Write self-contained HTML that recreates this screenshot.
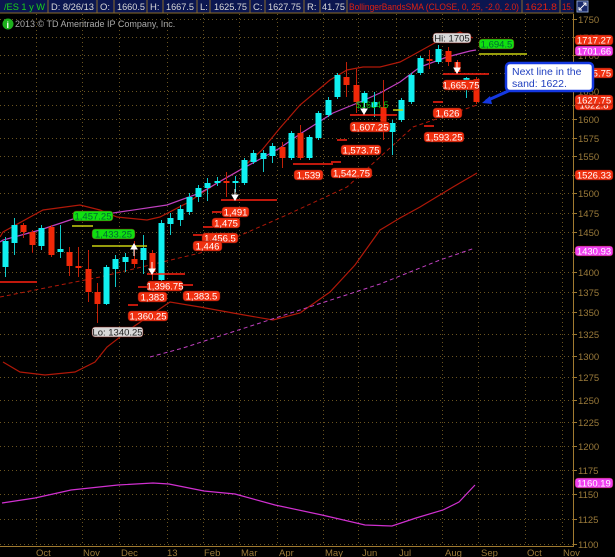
<!DOCTYPE html>
<html><head><meta charset="utf-8"><style>
html,body{margin:0;padding:0;background:#000;width:615px;height:557px;overflow:hidden}
svg{display:block}
text{font-family:"Liberation Sans",sans-serif}
</style></head><body>
<svg id="s" width="615" height="557" viewBox="0 0 615 557" xmlns="http://www.w3.org/2000/svg">
<rect width="615" height="557" fill="#000"/>
<g id="grid" stroke="#6a5420" stroke-width="1" stroke-dasharray="1,3"></g>
<!-- header -->
<rect x="0" y="0" width="574" height="13" fill="#0b1650"/>
<g stroke="#8a6a2a" stroke-width="1">
<line x1="48" y1="0" x2="48" y2="13"/><line x1="97" y1="0" x2="97" y2="13"/><line x1="114" y1="0" x2="114" y2="13"/>
<line x1="147" y1="0" x2="147" y2="13"/><line x1="163" y1="0" x2="163" y2="13"/><line x1="197" y1="0" x2="197" y2="13"/>
<line x1="210" y1="0" x2="210" y2="13"/><line x1="250" y1="0" x2="250" y2="13"/><line x1="265" y1="0" x2="265" y2="13"/>
<line x1="304" y1="0" x2="304" y2="13"/><line x1="320" y1="0" x2="320" y2="13"/><line x1="347" y1="0" x2="347" y2="13"/>
<line x1="522" y1="0" x2="522" y2="13"/><line x1="560" y1="0" x2="560" y2="13"/><line x1="0" y1="13" x2="574" y2="13"/>
</g>
<g font-size="9.5" fill="#d8d8d8">
<text x="4" y="10" fill="#19d219" textLength="41" lengthAdjust="spacingAndGlyphs">/ES 1 y W</text>
<text x="51" y="10" textLength="43" lengthAdjust="spacingAndGlyphs">D: 8/26/13</text><text x="100" y="10">O:</text><text x="117" y="10" textLength="28" lengthAdjust="spacingAndGlyphs">1660.5</text>
<text x="150" y="10">H:</text><text x="166" y="10" textLength="28" lengthAdjust="spacingAndGlyphs">1667.5</text><text x="200" y="10">L:</text>
<text x="214" y="10" textLength="33" lengthAdjust="spacingAndGlyphs">1625.75</text><text x="253" y="10">C:</text><text x="268" y="10" textLength="33" lengthAdjust="spacingAndGlyphs">1627.75</text>
<text x="307" y="10">R:</text><text x="322" y="10" textLength="23" lengthAdjust="spacingAndGlyphs">41.75</text>
<text x="349" y="10" fill="#e02010" textLength="170" lengthAdjust="spacingAndGlyphs">BollingerBandsSMA (CLOSE, 0, 25, -2.0, 2.0)</text>
<text x="525" y="10" fill="#e02010" textLength="32" lengthAdjust="spacingAndGlyphs">1621.8</text><text x="562" y="10" fill="#e02010" textLength="11" lengthAdjust="spacingAndGlyphs">15.</text>
</g>
<rect x="577" y="1" width="11" height="11" fill="#1a2a6a" stroke="#8aa0d0"/>
<path d="M579 10 L586 3 M583 3 L586 3 L586 6 M579 7 L579 10 L582 10" stroke="#fff" fill="none"/>
<circle cx="8" cy="24" r="5.5" fill="#1cb01c"/><text x="6.5" y="28" font-size="9" fill="#fff" font-weight="bold">i</text>
<text x="15" y="27" font-size="9" fill="#aaa">2013 © TD Ameritrade IP Company, Inc.</text>
<!-- axis -->
<line x1="573.5" y1="14" x2="573.5" y2="546" stroke="#a07a30"/>
<line x1="0" y1="546.5" x2="574" y2="546.5" stroke="#a07a30"/>
<g id="ax" font-size="9.5" fill="#9a7a3a"></g>
<g font-size="9.5" fill="#9a7a3a">
<text x="36" y="556">Oct</text><text x="83" y="556">Nov</text><text x="121" y="556">Dec</text><text x="167" y="556">13</text>
<text x="204" y="556">Feb</text><text x="241" y="556">Mar</text><text x="279" y="556">Apr</text><text x="325" y="556">May</text>
<text x="362" y="556">Jun</text><text x="399" y="556">Jul</text><text x="445" y="556">Aug</text><text x="481" y="556">Sep</text>
<text x="527" y="556">Oct</text><text x="563" y="556">Nov</text>
</g>
<!-- bands -->
<polyline fill="none" stroke="#b01808" stroke-width="1.2" points="0,237 3,232 43,210 80,205 100,210 117,217 147,220 160,217 187,203 217,183 240,170 262,150 280,128 300,105 330,80 347,70 363,67 380,67 400,62 413,55 440,40 460,32 473,38"/>
<polyline fill="none" stroke="#c040c0" stroke-width="1.2" points="0,242 3,240 40,230 73,219 113,213 167,205 200,193 240,170 262,158 280,148 300,134 333,113 360,102 380,93 400,82 420,67 447,57 470,51 476,50"/>
<polyline fill="none" stroke="#b01808" stroke-width="1.2" points="3,362 20,372 45,375 75,372 95,362 107,347 133,327 170,302 200,307 233,313 273,320 300,313 330,292 355,265 380,230 400,218 420,207 453,187 477,173"/>
<polyline fill="none" stroke="#b01808" stroke-width="1" stroke-dasharray="4,3" points="0,297 100,277 200,253 280,218 347,187 413,127 477,105"/>
<polyline fill="none" stroke="#c040c0" stroke-width="1" stroke-dasharray="4,3" points="150,357 183,348 300,310 380,284 440,260 475,248"/>
<polyline fill="none" stroke="#d030d0" stroke-width="1.2" points="2,503 35,498 71,490 118,485 153,483 169,484 204,491 235,494 275,505 322,515 365,525 392,526 416,518 443,510 459,502 475,485"/>
<g id="cd"></g>
<!-- level lines -->
<g stroke="#ff2010" stroke-width="1.5">
<line x1="0" y1="282" x2="37" y2="282"/><line x1="147" y1="274" x2="185" y2="274"/><line x1="221" y1="200" x2="277" y2="200"/>
<line x1="293" y1="164" x2="333" y2="164"/><line x1="350" y1="115" x2="397" y2="115"/><line x1="443" y1="74" x2="489" y2="74"/>
<line x1="433" y1="102" x2="443" y2="102"/><line x1="424" y1="126" x2="434" y2="126"/><line x1="337" y1="140" x2="347" y2="140"/>
<line x1="331" y1="162" x2="341" y2="162"/><line x1="128" y1="305" x2="138" y2="305"/><line x1="138" y1="287" x2="148" y2="287"/>
<line x1="183" y1="285" x2="193" y2="285"/><line x1="193" y1="235" x2="203" y2="235"/><line x1="203" y1="227" x2="213" y2="227"/>
<line x1="212" y1="212" x2="222" y2="212"/>
</g>
<g stroke="#c8d010" stroke-width="1.5">
<line x1="72" y1="226" x2="93" y2="226"/><line x1="92" y1="246" x2="147" y2="246"/><line x1="479" y1="54" x2="527" y2="54"/>
<line x1="393" y1="110" x2="403" y2="110"/>
</g>
<!-- arrows -->
<g fill="#fff" stroke="#fff">
<line x1="134" y1="247" x2="134" y2="256"/><path d="M131 249 L134 244 L137 249Z"/>
<line x1="152" y1="262" x2="152" y2="271"/><path d="M149 269 L152 274 L155 269Z"/>
<line x1="235" y1="189" x2="235" y2="197"/><path d="M232 195 L235 200 L238 195Z"/>
<line x1="364" y1="103" x2="364" y2="111"/><path d="M361 109 L364 114 L367 109Z"/>
<line x1="457" y1="62" x2="457" y2="70"/><path d="M454 68 L457 73 L460 68Z"/>
</g>
<g id="lb" font-size="9.5"></g>
<text x="356" y="108" font-size="9" fill="#10c010">$1614.5</text>
<!-- callout -->
<path d="M515 88 L486 101" stroke="#1438e0" stroke-width="3"/>
<path d="M482 103 L490 96 L492 104Z" fill="#1438e0"/>
<rect x="506" y="63" width="87" height="28" rx="4" fill="#fff" stroke="#1438e0" stroke-width="2.5"/>
<text x="512" y="75" font-size="10.5" fill="#2040c0">Next line in the</text>
<text x="512" y="87" font-size="10.5" fill="#2040c0">sand: 1622.</text>
</svg>
<script>
var NS="http://www.w3.org/2000/svg";
function el(p,t,a,txt){var e=document.createElementNS(NS,t);for(var k in a)e.setAttribute(k,a[k]);if(txt!=null)e.textContent=txt;p.appendChild(e);return e;}
var g=document.getElementById('grid'),ax=document.getElementById('ax');
var lv=[[1750,19],[1725,37],[1700,55],[1675,73],[1650,91],[1625,105],[1600,119],[1575,138],[1550,156],[1525,175],[1500,193],[1475,213],[1450,232],[1425,252],[1400,272],[1375,292],[1350,312],[1325,334],[1300,356],[1275,377],[1250,400],[1225,422],[1200,446],[1175,470],[1150,494],[1125,519],[1100,544]];
lv.forEach(function(l){el(g,'line',{x1:0,y1:l[1]+.5,x2:573,y2:l[1]+.5});el(ax,'line',{x1:573,y1:l[1]+.5,x2:577,y2:l[1]+.5,stroke:'#a07a30'});el(ax,'text',{x:578,y:l[1]+4},String(l[0]));});
[36,82,119,167,203,239,277,323,358,396,442,478,525,562].forEach(function(x){el(g,'line',{x1:x+.5,y1:14,x2:x+.5,y2:546});});
var C=[[5,1,241,267,237,277],[14,1,225,243,218,255],[23,0,225,232,223,238],[32,0,232,245,230,253],[41,1,228,246,225,250],[51,0,227,255,225,257],[60,1,249,252,225,258],[69,0,252,266,247,276],[78,0,266,268,247,277],[88,0,269,292,250,302],[97,0,292,304,283,323],[106,1,267,304,265,305],[115,1,259,269,255,287],[125,1,257,262,253,272],[134,0,259,264,241,268],[143,1,248,260,235,274],[152,0,253,272,250,280],[161,1,223,280,220,282],[170,1,218,224,213,235],[180,1,209,220,205,226],[189,1,197,212,193,215],[198,1,188,197,185,202],[207,1,183,188,178,201],[217,1,181,183,177,186],[226,0,181,183,172,197],[235,1,181,182,176,192],[244,1,160,183,158,185],[253,1,153,162,150,164],[263,1,153,159,150,172],[272,1,146,156,143,163],[282,0,147,158,142,168],[291,1,133,158,131,160],[300,0,133,158,125,160],[309,1,137,158,135,160],[318,1,113,138,111,140],[328,1,100,115,97,117],[337,1,75,97,73,99],[346,0,77,85,62,97],[356,0,85,102,69,113],[364,1,93,103,91,108],[374,1,102,107,92,117],[383,0,107,132,80,140],[392,1,123,132,120,155],[401,1,100,120,98,122],[411,1,75,102,73,104],[420,1,58,73,56,75],[429,0,59,61,50,69],[438,1,49,62,45,64],[448,0,51,62,47,66],[457,0,62,72,60,74],[466,1,78,80,77,98],[476,0,79,102,77,104]];
var cd=document.getElementById('cd');
C.forEach(function(c){var col=c[1]?'#10f0f0':'#f02808';var dc=c[1]?'#10c8c8':'#c02008';
el(cd,'line',{x1:c[0]+.5,y1:c[4],x2:c[0]+.5,y2:c[5],stroke:dc});
el(cd,'rect',{x:c[0]-2.5,y:c[2],width:6,height:Math.max(2,c[3]-c[2]),fill:col});});
var lb=document.getElementById('lb');
function L(x,y,w,t,bg,fg){el(lb,'rect',{x:x,y:y,width:w,height:10,rx:3,fill:bg,stroke:'#701008','stroke-width':.5});el(lb,'text',{x:x+w/2,y:y+8.5,'text-anchor':'middle',fill:fg},t);}
var R='#f03010',W='#fff';
L(222,207,27,'1,491',R,W);L(212,218,28,'1,475',R,W);L(202,233,36,'1,456.5',R,W);L(193,241,29,'1,446',R,W);
L(147,281,36,'1,396.75',R,W);L(138,292,29,'1,383',R,W);L(183,291,37,'1,383.5',R,W);L(128,311,40,'1,360.25',R,W);
L(92,327,51,'Lo: 1340.25','#d8d8d8','#222');L(73,211,40,'1,457.25','#10e010','#063');L(92,229,43,'1,433.25','#10e010','#063');
L(433,33,38,'Hi: 1705','#d8d8d8','#222');L(479,39,35,'1,694.5','#10e010','#063');
L(443,80,36,'1,665.75',R,W);L(433,108,29,'1,626',R,W);L(350,122,40,'1,607.25',R,W);L(424,132,40,'1,593.25',R,W);
L(341,145,40,'1,573.75',R,W);L(294,170,29,'1,539',R,W);L(331,168,41,'1,542.75',R,W);
L(575,100,38,'1622.8',R,W);
L(575,35,38,'1717.27',R,W);L(575,46,38,'1701.66','#f040f0',W);L(575,68,38,'1665.75',R,W);L(575,95,38,'1627.75',R,W);
L(575,170,38,'1526.33',R,W);L(575,246,38,'1430.93','#f040f0',W);L(575,478,38,'1160.19','#f040f0',W);
</script>
</body></html>
